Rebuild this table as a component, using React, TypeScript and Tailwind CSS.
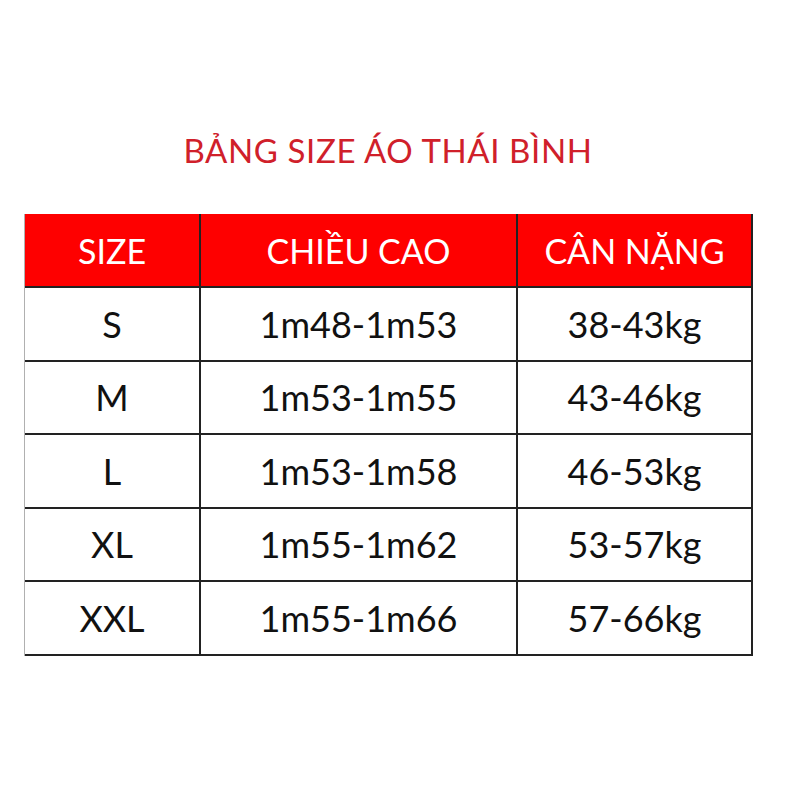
const rows = [
  ["S", "1m48-1m53", "38-43kg"],
  ["M", "1m53-1m55", "43-46kg"],
  ["L", "1m53-1m58", "46-53kg"],
  ["XL", "1m55-1m62", "53-57kg"],
  ["XXL", "1m55-1m66", "57-66kg"],
]

export default function App() {
  return (
    <div className="w-[800px] h-[800px] bg-white font-['Lato','Open_Sans',sans-serif]">
      <div className="pt-[129px] pr-[24px] text-center text-[33px] leading-[42px] text-[#d0202a] tracking-[0.6px]">
        BẢNG SIZE ÁO THÁI BÌNH
      </div>
      <div className="ml-[24px] mt-[43px] w-[729px] border-l border-l-[#b0b0b0] border-r-2 border-r-[#222]">
        <div className="grid grid-cols-[176px_317px_1fr] h-[74px] bg-[#fe0000] border-b-2 border-[#222] text-white text-[34px]">
          <div className="flex items-center justify-center border-r-2 border-[#222]">SIZE</div>
          <div className="flex items-center justify-center border-r-2 border-[#222]">CHIỀU CAO</div>
          <div className="flex items-center justify-center">CÂN NẶNG</div>
        </div>
        {rows.map((r) => (
          <div key={r[0]} className="grid grid-cols-[176px_317px_1fr] h-[73.5px] border-b-2 border-[#222] text-[#111] text-[36px]">
            <div className="flex items-center justify-center border-r-2 border-[#222]">{r[0]}</div>
            <div className="flex items-center justify-center border-r-2 border-[#222]">{r[1]}</div>
            <div className="flex items-center justify-center">{r[2]}</div>
          </div>
        ))}
      </div>
    </div>
  )
}
